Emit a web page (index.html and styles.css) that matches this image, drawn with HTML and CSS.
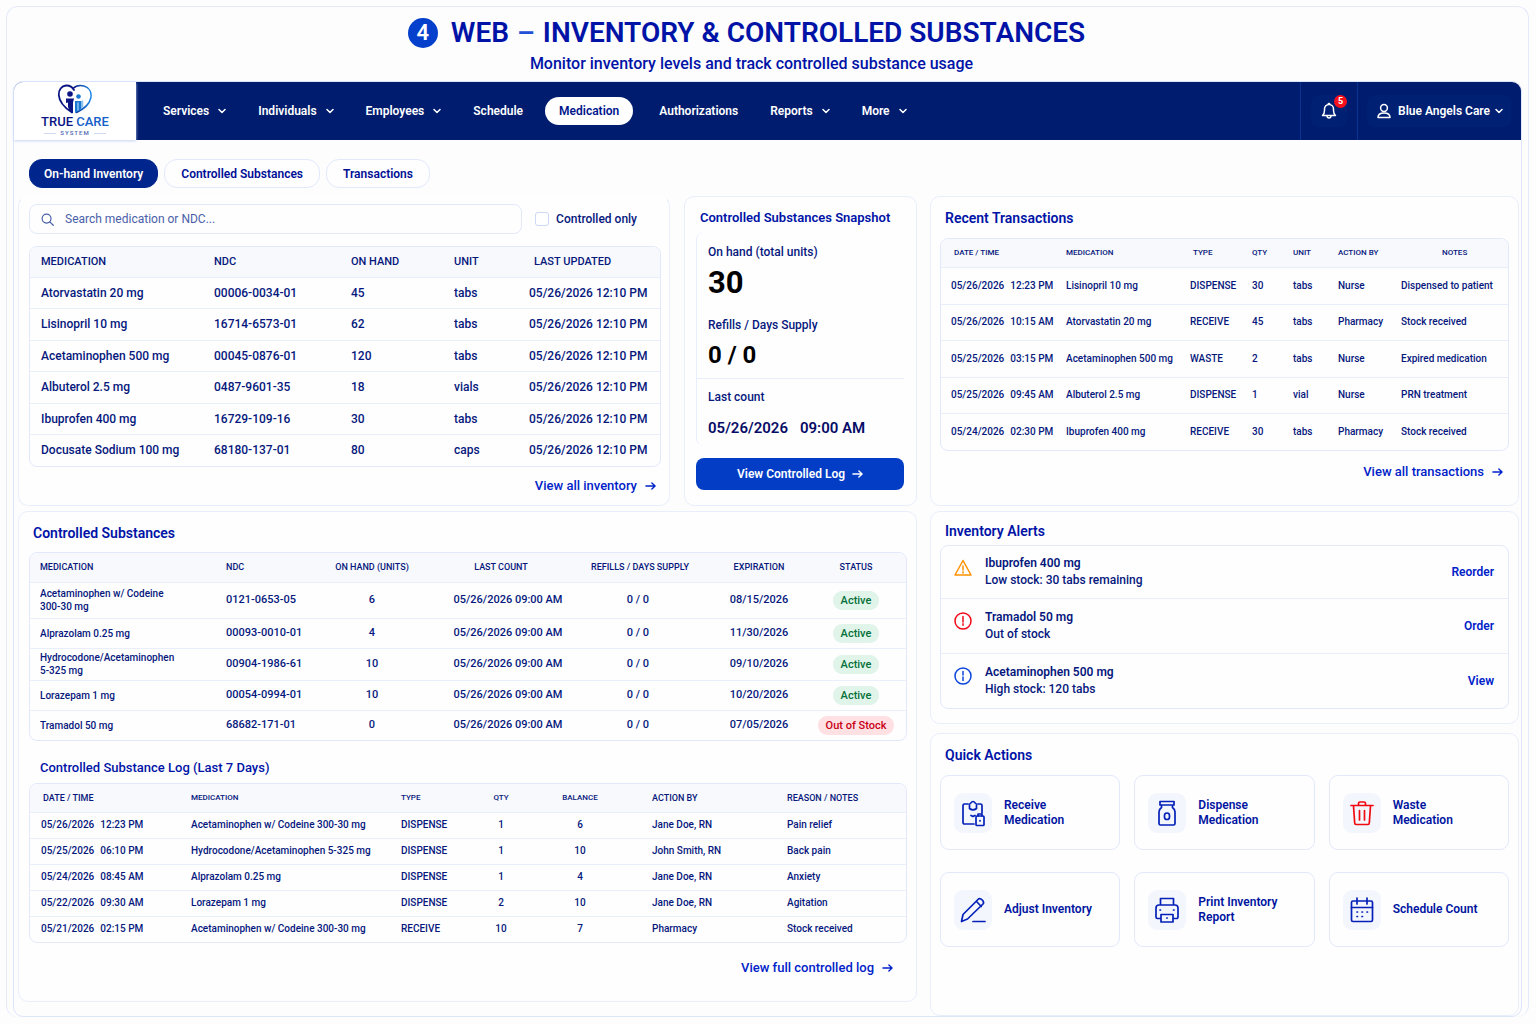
FILE: index.html
```html
<!DOCTYPE html>
<html lang="en">
<head>
<meta charset="utf-8">
<meta name="viewport" content="width=device-width, initial-scale=1">
<title>Inventory &amp; Controlled Substances</title>
<link rel="stylesheet" href="styles.css">
</head>
<body>
<svg class="sprite" aria-hidden="true">
  <symbol id="chevron" viewBox="0 0 8 8"><path d="M1 2.500 4 5.500 7 2.500"/></symbol>
  <symbol id="arrow" viewBox="0 0 12 10"><path d="M1 5h10M7.500 1.800 11 5 7.500 8.200"/></symbol>
</svg>
<div class="frame">
  <header class="intro">
    <h1><span class="step">4</span>WEB <span class="dash">–</span> INVENTORY &amp; CONTROLLED SUBSTANCES</h1>
    <p>Monitor inventory levels and track controlled substance usage</p>
  </header>

  <div class="app">
    <div class="topbar">
      <a class="brand" href="#" aria-label="True Care System">
        <svg class="brand-mark" viewBox="0 0 36 30">
          <defs>
            <linearGradient id="heart" x1="0" x2="1"><stop offset="0" stop-color="#0a1583"/><stop offset=".5" stop-color="#1457b8"/><stop offset="1" stop-color="#1a86e6"/></linearGradient>
          </defs>
          <path d="M17 6C15 2.500 12 1.300 9 1.500 4.500 2 1.500 6 1.800 11 2.200 18 8 24 15 28.500" fill="none" stroke="#0a1583" stroke-width="1.800"/>
          <path d="M16 4.500C19 1.500 23 .8 27 2 32 3.500 35 8 33.800 14 32.500 20 27 25 19.500 28.500" fill="none" stroke="url(#heart)" stroke-width="1.500"/>
          <circle cx="13" cy="10" r="2.800" fill="#0a1583" stroke="none"/>
          <path d="M9 14.500h8l-1 4v10.500c-3-1.500-5-4-5-6.500v-4l-2 .5z" fill="#0a1583" stroke="none"/>
          <circle cx="21.500" cy="12.500" r="2.300" fill="#1878d4" stroke="none"/>
          <path d="M18 17h6.500v8l-6.500 4z" fill="#1878d4" stroke="none"/>
          <path d="M21 19v7M25.500 17v6" stroke="#8cc2f2"/>
        </svg>
        <span class="brand-name">TRUE <b>CARE</b></span>
        <span class="brand-sub">SYSTEM</span>
      </a>
      <nav class="menu">
        <a href="#">Services<svg class="chev"><use href="#chevron"/></svg></a>
        <a href="#">Individuals<svg class="chev"><use href="#chevron"/></svg></a>
        <a href="#">Employees<svg class="chev"><use href="#chevron"/></svg></a>
        <a href="#">Schedule</a>
        <a href="#" class="current" aria-current="page">Medication</a>
        <a href="#">Authorizations</a>
        <a href="#">Reports<svg class="chev"><use href="#chevron"/></svg></a>
        <a href="#">More<svg class="chev"><use href="#chevron"/></svg></a>
      </nav>
      <div class="bell-area">
        <button class="bell" type="button" aria-label="Notifications">
          <svg viewBox="0 0 18 18"><path d="M2.500 13.500h13c-1.500-1.300-2-2.500-2-5V7a4.500 4.500 0 0 0-9 0v1.500c0 2.500-.5 3.700-2 5z"/><path d="M7 14c.3 2.700 3.700 2.700 4 0M8.200 2.200c.2-1 1.400-1 1.600 0"/></svg>
          <span class="badge">5</span>
        </button>
      </div>
      <button class="account" type="button">
        <svg class="person" viewBox="0 0 16 16"><circle cx="8" cy="5" r="3.400"/><path d="M2 14.500c0-3 2-4.500 6-4.500s6 1.500 6 4.500z"/></svg>
        Blue Angels Care
        <svg class="chev"><use href="#chevron"/></svg>
      </button>
    </div>

    <div class="tabs">
      <button type="button" class="tab active">On-hand Inventory</button>
      <button type="button" class="tab">Controlled Substances</button>
      <button type="button" class="tab">Transactions</button>
    </div>

    <main class="layout">
      <div class="col-left">
        <div class="upper">
          <section class="panel inventory">
            <div class="filters">
              <label class="search">
                <svg viewBox="0 0 14 14"><circle cx="6" cy="6" r="4.800"/><path d="M9.500 9.500 13.200 13.200"/></svg>
                <input type="text" placeholder="Search medication or NDC..." aria-label="Search medication or NDC">
              </label>
              <label class="check"><input type="checkbox">Controlled only</label>
            </div>
            <div class="table-box">
              <table class="t-inventory">
                <colgroup><col class="i1"><col class="i2"><col class="i3"><col class="i4"><col class="i5"></colgroup>
                <thead><tr><th>MEDICATION</th><th>NDC</th><th>ON HAND</th><th>UNIT</th><th>LAST UPDATED</th></tr></thead>
                <tbody>
                  <tr><td>Atorvastatin 20 mg</td><td>00006-0034-01</td><td>45</td><td>tabs</td><td><span class="when"><span>05/26/2026</span><span>12:10 PM</span></span></td></tr>
                  <tr><td>Lisinopril 10 mg</td><td>16714-6573-01</td><td>62</td><td>tabs</td><td><span class="when"><span>05/26/2026</span><span>12:10 PM</span></span></td></tr>
                  <tr><td>Acetaminophen 500 mg</td><td>00045-0876-01</td><td>120</td><td>tabs</td><td><span class="when"><span>05/26/2026</span><span>12:10 PM</span></span></td></tr>
                  <tr><td>Albuterol 2.5 mg</td><td>0487-9601-35</td><td>18</td><td>vials</td><td><span class="when"><span>05/26/2026</span><span>12:10 PM</span></span></td></tr>
                  <tr><td>Ibuprofen 400 mg</td><td>16729-109-16</td><td>30</td><td>tabs</td><td><span class="when"><span>05/26/2026</span><span>12:10 PM</span></span></td></tr>
                  <tr><td>Docusate Sodium 100 mg</td><td>68180-137-01</td><td>80</td><td>caps</td><td><span class="when"><span>05/26/2026</span><span>12:10 PM</span></span></td></tr>
                </tbody>
              </table>
            </div>
            <a class="more" href="#">View all inventory<svg class="arrow"><use href="#arrow"/></svg></a>
          </section>

          <section class="panel snapshot">
            <h2>Controlled Substances Snapshot</h2>
            <dl>
              <div class="fact"><dt>On hand (total units)</dt><dd class="big">30</dd></div>
              <div class="fact"><dt>Refills / Days Supply</dt><dd class="mid">0 / 0</dd></div>
              <div class="fact"><dt>Last count</dt><dd class="date"><span>05/26/2026</span><span>09:00 AM</span></dd></div>
            </dl>
            <button type="button" class="primary">View Controlled Log<svg class="arrow"><use href="#arrow"/></svg></button>
          </section>
        </div>

        <section class="panel controlled">
          <h2>Controlled Substances</h2>
          <div class="table-box">
            <table class="t-controlled">
              <colgroup><col class="c1"><col class="c2"><col class="c3"><col class="c4"><col class="c5"><col class="c6"><col class="c7"></colgroup>
              <thead><tr><th>MEDICATION</th><th>NDC</th><th>ON HAND (UNITS)</th><th>LAST COUNT</th><th>REFILLS / DAYS SUPPLY</th><th>EXPIRATION</th><th>STATUS</th></tr></thead>
              <tbody>
                <tr class="tall"><td>Acetaminophen w/ Codeine<br>300-30 mg</td><td>0121-0653-05</td><td>6</td><td>05/26/2026 09:00 AM</td><td>0 / 0</td><td>08/15/2026</td><td><span class="pill ok">Active</span></td></tr>
                <tr><td>Alprazolam 0.25 mg</td><td>00093-0010-01</td><td>4</td><td>05/26/2026 09:00 AM</td><td>0 / 0</td><td>11/30/2026</td><td><span class="pill ok">Active</span></td></tr>
                <tr class="two-line"><td>Hydrocodone/Acetaminophen<br>5-325 mg</td><td>00904-1986-61</td><td>10</td><td>05/26/2026 09:00 AM</td><td>0 / 0</td><td>09/10/2026</td><td><span class="pill ok">Active</span></td></tr>
                <tr><td>Lorazepam 1 mg</td><td>00054-0994-01</td><td>10</td><td>05/26/2026 09:00 AM</td><td>0 / 0</td><td>10/20/2026</td><td><span class="pill ok">Active</span></td></tr>
                <tr><td>Tramadol 50 mg</td><td>68682-171-01</td><td>0</td><td>05/26/2026 09:00 AM</td><td>0 / 0</td><td>07/05/2026</td><td><span class="pill out">Out of Stock</span></td></tr>
              </tbody>
            </table>
          </div>
          <h3>Controlled Substance Log (Last 7 Days)</h3>
          <div class="table-box">
            <table class="t-log">
              <colgroup><col class="l1"><col class="l2"><col class="l3"><col class="l4"><col class="l5"><col class="l6"><col class="l7"></colgroup>
              <thead><tr><th>DATE / TIME</th><th class="small">MEDICATION</th><th class="small">TYPE</th><th class="small">QTY</th><th class="small">BALANCE</th><th>ACTION BY</th><th>REASON / NOTES</th></tr></thead>
              <tbody>
                <tr><td><span class="when"><span>05/26/2026</span><span>12:23 PM</span></span></td><td>Acetaminophen w/ Codeine 300-30 mg</td><td>DISPENSE</td><td>1</td><td>6</td><td>Jane Doe, RN</td><td>Pain relief</td></tr>
                <tr><td><span class="when"><span>05/25/2026</span><span>06:10 PM</span></span></td><td>Hydrocodone/Acetaminophen 5-325 mg</td><td>DISPENSE</td><td>1</td><td>10</td><td>John Smith, RN</td><td>Back pain</td></tr>
                <tr><td><span class="when"><span>05/24/2026</span><span>08:45 AM</span></span></td><td>Alprazolam 0.25 mg</td><td>DISPENSE</td><td>1</td><td>4</td><td>Jane Doe, RN</td><td>Anxiety</td></tr>
                <tr><td><span class="when"><span>05/22/2026</span><span>09:30 AM</span></span></td><td>Lorazepam 1 mg</td><td>DISPENSE</td><td>2</td><td>10</td><td>Jane Doe, RN</td><td>Agitation</td></tr>
                <tr><td><span class="when"><span>05/21/2026</span><span>02:15 PM</span></span></td><td>Acetaminophen w/ Codeine 300-30 mg</td><td>RECEIVE</td><td>10</td><td>7</td><td>Pharmacy</td><td>Stock received</td></tr>
              </tbody>
            </table>
          </div>
          <a class="more" href="#">View full controlled log<svg class="arrow"><use href="#arrow"/></svg></a>
        </section>
      </div>

      <div class="col-right">
        <section class="panel recent">
          <h2>Recent Transactions</h2>
          <div class="table-box">
            <table class="t-recent">
              <colgroup><col class="r1"><col class="r2"><col class="r3"><col class="r4"><col class="r5"><col class="r6"><col class="r7"></colgroup>
              <thead><tr><th>DATE / TIME</th><th>MEDICATION</th><th>TYPE</th><th>QTY</th><th>UNIT</th><th>ACTION BY</th><th>NOTES</th></tr></thead>
              <tbody>
                <tr><td><span class="when"><span>05/26/2026</span><span>12:23 PM</span></span></td><td>Lisinopril 10 mg</td><td>DISPENSE</td><td>30</td><td>tabs</td><td>Nurse</td><td>Dispensed to patient</td></tr>
                <tr><td><span class="when"><span>05/26/2026</span><span>10:15 AM</span></span></td><td>Atorvastatin 20 mg</td><td>RECEIVE</td><td>45</td><td>tabs</td><td>Pharmacy</td><td>Stock received</td></tr>
                <tr><td><span class="when"><span>05/25/2026</span><span>03:15 PM</span></span></td><td>Acetaminophen 500 mg</td><td>WASTE</td><td>2</td><td>tabs</td><td>Nurse</td><td>Expired medication</td></tr>
                <tr><td><span class="when"><span>05/25/2026</span><span>09:45 AM</span></span></td><td>Albuterol 2.5 mg</td><td>DISPENSE</td><td>1</td><td>vial</td><td>Nurse</td><td>PRN treatment</td></tr>
                <tr><td><span class="when"><span>05/24/2026</span><span>02:30 PM</span></span></td><td>Ibuprofen 400 mg</td><td>RECEIVE</td><td>30</td><td>tabs</td><td>Pharmacy</td><td>Stock received</td></tr>
              </tbody>
            </table>
          </div>
          <a class="more" href="#">View all transactions<svg class="arrow"><use href="#arrow"/></svg></a>
        </section>

        <section class="panel alerts">
          <h2>Inventory Alerts</h2>
          <ul>
            <li>
              <svg class="warn" viewBox="0 0 20 20"><path d="M10 2.500 18 17H2z"/><path d="M10 8v4M10 13.700v1.300"/></svg>
              <div><strong>Ibuprofen 400 mg</strong><span>Low stock: 30 tabs remaining</span></div>
              <a href="#">Reorder</a>
            </li>
            <li>
              <svg class="danger" viewBox="0 0 20 20"><circle cx="10" cy="10" r="8"/><path d="M10 5.500v5.500M10 12.800v1.500"/></svg>
              <div><strong>Tramadol 50 mg</strong><span>Out of stock</span></div>
              <a href="#">Order</a>
            </li>
            <li>
              <svg class="info" viewBox="0 0 20 20"><circle cx="10" cy="10" r="8"/><path d="M10 5.500v3.500M10 11v3.500"/></svg>
              <div><strong>Acetaminophen 500 mg</strong><span>High stock: 120 tabs</span></div>
              <a href="#">View</a>
            </li>
          </ul>
        </section>

        <section class="panel quick">
          <h2>Quick Actions</h2>
          <div class="actions">
            <button type="button"><span class="tile"><svg viewBox="0 0 28 28"><path d="M9 5H5.500A1.500 1.500 0 0 0 4 6.500v17A1.500 1.500 0 0 0 5.500 25H15M19 5h2.500A1.500 1.500 0 0 1 23 6.500V14"/><path d="M10.500 9.500V5c1.500 0 1.500-2.500 3.500-2.500s2 2.500 3.500 2.500v4.500c-2 1.500-5 1.500-7 0zM12 16.500l2 1 2-1"/><rect x="17" y="17" width="8" height="9.500" rx="1"/><path d="M19 17v-2h4v2M21 21.500v.5"/></svg></span><span>Receive<br>Medication</span></button>
            <button type="button"><span class="tile"><svg viewBox="0 0 28 28"><path d="M7 2.500h14v3.500H7zM8.500 6v2.500C7 9.500 6 11 6 13v11.500A1.500 1.500 0 0 0 7.500 26h13a1.500 1.500 0 0 0 1.500-1.500V13c0-2-1-3.500-2.500-4.500V6"/><rect x="11.500" y="14" width="5" height="6.500" rx="2.500"/></svg></span><span>Dispense<br>Medication</span></button>
            <button type="button"><span class="tile red"><svg viewBox="0 0 28 28"><path d="M3 6.500h22M10.500 6V4.500A1.500 1.500 0 0 1 12 3h4a1.500 1.500 0 0 1 1.500 1.500V6M5.500 7l1.200 17a1.500 1.500 0 0 0 1.500 1.500h11.600a1.500 1.500 0 0 0 1.500-1.500L22.500 7M11.500 11.500v9.500M16.500 11.500v9.500"/></svg></span><span>Waste<br>Medication</span></button>
            <button type="button"><span class="tile"><svg viewBox="0 0 28 28"><path d="M2.500 25.500 4 18.500 19.500 3c2-1.500 6.500 2.500 4.500 5L8.500 23zM17.500 5.500l4.800 5M14 25.500h12"/></svg></span><span>Adjust Inventory</span></button>
            <button type="button"><span class="tile"><svg viewBox="0 0 28 28"><path d="M7.500 9V2.500h13V9M7.500 22.500H4.500a1.500 1.500 0 0 1-1.500-1.500V12c0-2 1-3 3-3h16c2 0 3 1 3 3v9a1.500 1.500 0 0 1-1.500 1.500h-3M8 18.500h12v7.500H8zM7 14h.5M20.500 14h.5M13.800 22h.4"/></svg></span><span>Print Inventory<br>Report</span></button>
            <button type="button"><span class="tile"><svg viewBox="0 0 28 28"><rect x="3.500" y="5" width="21" height="20.500" rx="1.500"/><path d="M3.500 11.500h21M9 2v6M19 2v6"/><path d="M9 16h.5M14 16h.5M19 16h.5M9 20.500h.5M14 20.500h.5"/></svg></span><span>Schedule Count</span></button>
          </div>
        </section>
      </div>
    </main>
  </div>
</div>
</body>
</html>
```
FILE: styles.css
```css
:root {
  --navy: #001c6e;
  --ink: #06187c;
  --title: #0013a6;
  --link: #0022c8;
  --line: #e9eefb;
  --box: #e2e9fb;
}

* { box-sizing: border-box; }

body {
  margin: 0;
  padding: 6px 7px 4px 6px;
  background: #fdfdfe;
  color: var(--ink);
  font: 500 12px/16px Roboto, "Liberation Sans", sans-serif;
}

h1, h2, h3, p, ul, dl, dd { margin: 0; padding: 0; }
a { color: var(--link); text-decoration: none; }
button { font: inherit; color: inherit; cursor: pointer; }
svg { fill: none; stroke: currentColor; stroke-width: 1.500; stroke-linecap: round; stroke-linejoin: round; flex: none; }
.sprite { display: none; }

.frame {
  border: 1px solid #e4e9fb;
  border-bottom: 0;
  border-radius: 12px;
  padding: 0 6px;
}

/* Page heading */
.intro { padding: 9px 42px 7px 0; text-align: center; color: var(--title); }
.intro h1 { display: flex; justify-content: center; align-items: center; gap: 8px; font-size: 28px; line-height: 34px; font-weight: 600; }
.intro p { padding-left: 10px; margin-top: 4px; font-size: 16px; line-height: 20px; }
.step { width: 30px; height: 30px; margin-right: 5px; border-radius: 50%; background: #0440cc; color: #fff; font-size: 22px; line-height: 30px; }
.dash { color: #2450d8; }

/* Application window */
.app { border: 1px solid #dde5fa; border-radius: 10px; }
.topbar { display: flex; height: 58px; background: var(--navy); border-radius: 9px 9px 0 0; color: #fff; font-weight: 600; }
.brand { display: flex; flex-direction: column; align-items: center; width: 122px; padding-top: 2px; background: #fff; border-top-left-radius: 9px; box-shadow: 0 1px 3px #c5d2f2; color: #0a1583; }
.brand-mark { width: 36px; height: 30px; }
.brand-name { font-size: 13px; line-height: 14px; font-weight: 500; margin-top: 1px; }
.brand-name b { font-weight: 500; color: #1560c8; }
.brand-sub { display: flex; align-items: center; gap: 4px; font-size: 6px; line-height: 8px; letter-spacing: 1px; color: #5d72b8; }
.brand-sub::before, .brand-sub::after { content: ""; width: 12px; height: 1px; background: #d0d9f0; }

.menu { display: flex; align-items: center; flex: 1; gap: 32px; padding-left: 27px; }
.menu a { display: flex; align-items: center; color: #fff; white-space: nowrap; }
.chev { width: 8px; height: 8px; margin-left: 9px; }
.menu .current { height: 28px; margin: 0 -6px 0 -10px; padding: 0 14px; border-radius: 14px; background: #fff; color: #00168c; }
.bell-area { display: flex; align-items: center; justify-content: center; width: 58px; border: solid #0a3290; border-width: 0 1px; }
.bell { position: relative; width: 36px; height: 32px; padding: 0; border: 0; border-radius: 8px; background: #002074; color: #fff; }
.bell svg { display: block; width: 18px; height: 18px; margin: 0 auto; }
.badge { position: absolute; top: 0; right: 0; width: 13px; height: 13px; border-radius: 50%; background: #f5101c; font-size: 9px; line-height: 13px; font-weight: 700; }
.account { display: flex; align-items: center; height: 32px; margin: 13px 10px 13px 9px; padding: 0 8px 0 9px; border: 0; border-radius: 8px; background: #002074; color: #fff; white-space: nowrap; }
.person { width: 16px; height: 16px; margin-right: 6px; }
.account .chev { margin-left: 5px; }

.tabs { display: flex; gap: 6px; padding: 19px 15px 8px; }
.tab { height: 29px; padding: 0 16px; border: 1px solid var(--box); border-radius: 13px; background: #fefeff; color: #000e96; font-weight: 600; }
.tab.active { padding: 0 14px; background: #00258c; border-color: #00258c; color: #fff; }

.layout { display: grid; grid-template-columns: minmax(0, 899fr) minmax(0, 589fr); gap: 13px; padding: 0 2px 0 4px; }
.col-left, .col-right { display: flex; flex-direction: column; }
.col-left { gap: 5px; padding-bottom: 14px; }
.upper { display: grid; grid-template-columns: minmax(0, 652fr) minmax(0, 233fr); gap: 14px; }
.panel { border: 1px solid var(--line); border-radius: 10px; background: #fefeff; }
.panel h2 { font-size: 14px; line-height: 18px; font-weight: 600; color: var(--title); }
.more { display: flex; align-items: center; justify-content: flex-end; gap: 8px; height: 20px; font-size: 13px; font-weight: 500; }
.arrow { width: 11px; height: 10px; }

/* Tables */
.table-box { border: 1px solid var(--box); border-radius: 8px; overflow: hidden; }
table { width: 100%; table-layout: fixed; border-collapse: collapse; }
th, td { padding: 0 0 0 11px; text-align: left; font-weight: 500; white-space: nowrap; }
thead tr { background: #f8f9fd; }
tbody tr { border-top: 1px solid var(--line); }
.when { display: inline-flex; gap: 6px; }

/* On-hand inventory */
.inventory { border-top-color: transparent; padding: 7px 8px 9px 10px; }
.filters { display: flex; align-items: center; gap: 13px; margin-bottom: 12px; padding-right: 24px; }
.search { display: flex; align-items: center; flex: 1; height: 30px; padding: 0 12px 0 11px; border: 1px solid var(--box); border-radius: 8px; color: #4960a8; }
.search svg { width: 13px; height: 13px; margin-right: 7px; stroke-width: 1.300; }
.search input { flex: 1; min-width: 0; padding: 0 4px; border: 0; outline: 0; background: none; font: 400 12px/16px Roboto, "Liberation Sans", sans-serif; color: inherit; }
.search input::placeholder { color: #4960a8; opacity: 1; }
.check { display: flex; align-items: center; gap: 7px; white-space: nowrap; }
.check input { appearance: none; width: 14px; height: 14px; margin: 0; border: 1px solid #cdd8f4; border-radius: 3px; background: #fff; }
.t-inventory thead tr { height: 30px; }
.t-inventory th { font-size: 11px; }
.t-inventory th:last-child { padding-left: 16px; }
.t-inventory tbody tr { height: 31px; }
.t-inventory tbody tr:nth-child(even) { height: 32px; }
.t-inventory .when { gap: 3px; }
.i1 { width: 173px; } .i2 { width: 137px; } .i3 { width: 103px; } .i4 { width: 75px; } .i5 { width: 142px; }
.inventory .more { margin: 9px 5px 0 0; }

/* Snapshot */
.snapshot { display: flex; flex-direction: column; padding: 12px 12px 15px 11px; }
.snapshot h2 { padding-left: 4px; font-size: 13px; white-space: nowrap; }
.snapshot dl { flex: 1; border-left: 1px solid var(--line); border-radius: 8px; margin: 5px 0 12px; padding: 11px 0 0; }
.fact { padding-left: 11px; }
.fact:nth-child(2) { padding-bottom: 8px; border-bottom: 1px solid var(--line); }
.fact dt { font-size: 12px; line-height: 18px; }
.fact dd { color: #000; font-weight: 700; }
.fact .big { font-size: 31px; line-height: 36px; padding: 4px 0 15px; }
.fact .mid { font-size: 24px; line-height: 30px; padding-top: 6px; }
.fact .date { display: flex; gap: 12px; padding-top: 12px; font-size: 15px; line-height: 20px; font-weight: 600; color: #060c66; }
.fact:last-child { padding-top: 9px; }
.primary { display: flex; align-items: center; justify-content: center; gap: 7px; height: 32px; border: 0; border-radius: 8px; background: #033dc6; color: #fff; font-weight: 600; }

/* Controlled substances and log */
.controlled { padding: 12px 9px 23px 10px; }
.controlled h2 { padding-left: 4px; margin-bottom: 10px; }
.controlled h3 { margin: 18px 0 6px; padding-left: 11px; font-size: 13px; line-height: 18px; font-weight: 500; color: var(--title); }
.controlled .more { margin: 15px 14px 0 0; }
.t-controlled th { font-size: 9px; }
.t-controlled td { font-size: 11px; }
.t-controlled td:first-child { font-size: 10px; line-height: 13px; }
.t-controlled th:first-child, .t-controlled td:first-child { padding-left: 10px; }
.t-controlled thead tr { height: 29px; }
.t-controlled tbody tr { height: 30px; }
.t-controlled tbody .tall { height: 36px; }
.t-controlled tbody .two-line { height: 32px; }
.t-controlled th:nth-child(n+3), .t-controlled td:nth-child(n+3) { padding: 0; text-align: center; }
.t-controlled th:nth-child(4) { padding-right: 8px; }
.t-controlled td:nth-child(4) { padding-left: 6px; }
.t-controlled td:nth-child(5) { padding-right: 4px; }
.c1 { width: 185px; } .c2 { width: 87px; } .c3 { width: 140px; } .c4 { width: 126px; } .c5 { width: 144px; } .c6 { width: 94px; } .c7 { width: 100px; }
.pill { display: inline-block; height: 19px; padding: 0 8px; border-radius: 9px; font-size: 11px; line-height: 19px; vertical-align: middle; }
.ok { background: #e1f4ea; color: #047038; }
.out { background: #ffe1e4; color: #c80014; }

.t-log th { font-size: 9px; }
.t-log .small { font-size: 8px; }
.t-log td { font-size: 10px; }
.t-log thead tr { height: 28px; }
.t-log tbody tr { height: 26px; }
.t-log th:first-child { padding-left: 13px; }
.t-log th:nth-child(4), .t-log td:nth-child(4), .t-log th:nth-child(5), .t-log td:nth-child(5) { padding: 0; text-align: center; }
.t-log th:nth-child(6), .t-log td:nth-child(6) { padding-left: 32px; }
.l1 { width: 150px; } .l2 { width: 210px; } .l3 { width: 72px; } .l4 { width: 78px; } .l5 { width: 80px; } .l6 { width: 156px; } .l7 { width: 130px; }

/* Recent transactions */
.recent { padding: 12px 9px 23px; margin-bottom: 5px; }
.recent h2, .alerts h2, .quick h2 { padding-left: 5px; }
.recent h2 { margin-bottom: 11px; }
.t-recent th { font-size: 8px; }
.t-recent td { font-size: 10px; }
.t-recent th, .t-recent td { padding-left: 10px; }
.t-recent th:first-child { padding-left: 13px; }
.t-recent th:nth-child(3) { padding-left: 13px; }
.t-recent th:last-child { padding-left: 51px; }
.t-recent thead tr { height: 28px; }
.t-recent tbody tr { height: 37px; }
.t-recent tbody tr:nth-child(even) { height: 36px; }
.r1 { width: 115px; } .r2 { width: 124px; } .r3 { width: 62px; } .r4 { width: 41px; } .r5 { width: 45px; } .r6 { width: 63px; } .r7 { width: 117px; }
.recent .more { margin: 11px 6px 0 0; }

/* Alerts */
.alerts { padding: 10px 9px 14px; margin-bottom: 9px; }
.alerts ul { margin-top: 5px; border: 1px solid var(--box); border-radius: 8px; list-style: none; }
.alerts li { display: flex; align-items: center; height: 55px; padding: 0 14px 0 12px; }
.alerts li:first-child { height: 52px; }
.alerts li + li { border-top: 1px solid var(--line); }
.alerts li svg { align-self: flex-start; width: 20px; height: 20px; margin: 12px 12px 0 0; }
.alerts li div { flex: 1; }
.alerts strong, .alerts span { display: block; line-height: 17px; }
.alerts strong { font-weight: 600; }
.alerts li a { font-weight: 600; }
.alerts .warn { color: #ff9100; }
.alerts .danger { color: #f00a18; }
.alerts .info { color: #0b45dc; }

/* Quick actions */
.quick { flex: 1; padding: 12px 9px; }
.actions { display: grid; grid-template-columns: repeat(3, minmax(0, 1fr)); gap: 22px 14px; margin-top: 11px; }
.actions button { display: flex; align-items: center; gap: 12px; height: 75px; padding: 0 13px; border: 1px solid var(--box); border-radius: 9px; background: #fefeff; color: #0014a0; line-height: 15px; font-weight: 600; text-align: left; }
.tile { display: flex; flex: none; align-items: center; justify-content: center; width: 38px; height: 40px; border-radius: 9px; background: #f4f6fd; color: #0420b8; }
.tile svg { width: 28px; height: 28px; stroke-width: 1.700; }
.tile.red { color: #f00a10; }
```
